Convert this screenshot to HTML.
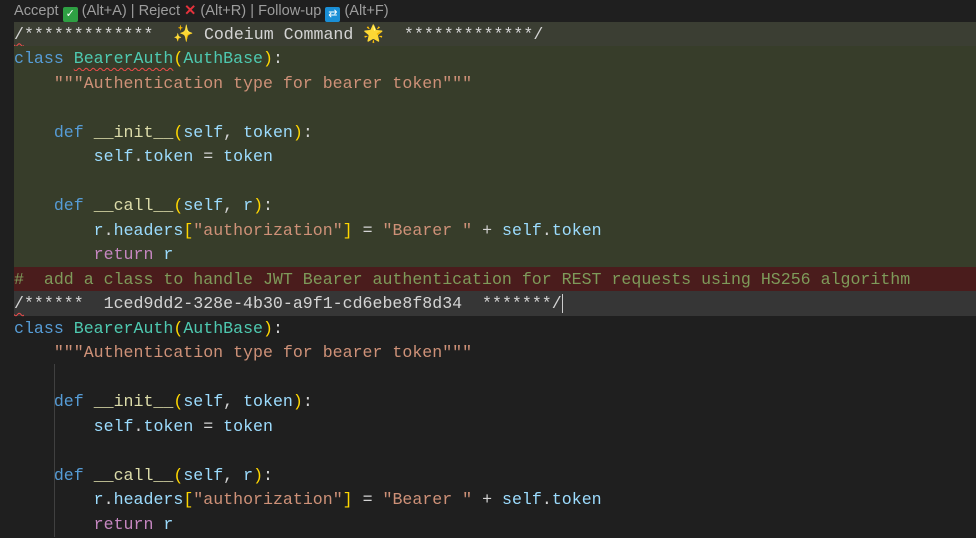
<!DOCTYPE html>
<html><head><meta charset="utf-8"><style>
body{margin:0;width:976px;height:537px;background:#1f1f1f;overflow:hidden;position:relative}
.top{position:absolute;left:14px;top:2px;font:14.6px "Liberation Sans",sans-serif;color:#9d9d9d;white-space:pre}
.ic{display:inline-block;width:15px;height:15px;border-radius:2px;vertical-align:-2px;text-align:center;font-size:11px;line-height:15px;color:#fff}
.code{position:absolute;left:14px;top:21.5px;right:0;font:16.6px "Liberation Mono","DejaVu Sans Mono",monospace;color:#d4d4d4}
.l{height:24.5px;line-height:26px;white-space:pre;position:relative}
.g{background:#373d2a}.gb{background:#3b3e33}.r{background:#4a1c1c}.u{background:#363636}
.k{color:#569cd6}.c{color:#4ec9b0}.y{color:#ffd700}.s{color:#ce9178}.f{color:#dcdcaa}.v{color:#9cdcfe}.p{color:#c586c0}.cm{color:#7e9a5a}.w{color:#d4d4d4}
.sq{text-decoration:underline wavy #f14c4c;text-decoration-thickness:1px;text-underline-offset:4px}
.guide{position:absolute;width:1px;background:#404040}
</style></head><body>
<div class="top">Accept <span class="ic" style="background:#2ea043">✓</span> (Alt+A) | Reject <span style="color:#e5323c;font-weight:bold">✕</span> (Alt+R) | Follow-up <span class="ic" style="background:#1a8fd6">⇄</span> (Alt+F)</div>
<div class="guide" style="left:54px;top:95px;height:172px;background:#4a5040"></div>
<div class="guide" style="left:54px;top:364px;height:173px"></div>
<div class="code">
<div class="l gb"><span class="sq">/</span>*************  <span class="y">✨</span> Codeium Command <span class="y">🌟</span>  *************/</div>
<div class="l g"><span class="k">class</span> <span class="c sq">BearerAuth</span><span class="y">(</span><span class="c">AuthBase</span><span class="y">)</span>:</div>
<div class="l g">    <span class="s">"""Authentication type for bearer token"""</span></div>
<div class="l g"> </div>
<div class="l g">    <span class="k">def</span> <span class="f">__init__</span><span class="y">(</span><span class="v">self</span>, <span class="v">token</span><span class="y">)</span>:</div>
<div class="l g">        <span class="v">self</span>.<span class="v">token</span> = <span class="v">token</span></div>
<div class="l g"> </div>
<div class="l g">    <span class="k">def</span> <span class="f">__call__</span><span class="y">(</span><span class="v">self</span>, <span class="v">r</span><span class="y">)</span>:</div>
<div class="l g">        <span class="v">r</span>.<span class="v">headers</span><span class="y">[</span><span class="s">"authorization"</span><span class="y">]</span> = <span class="s">"Bearer "</span> + <span class="v">self</span>.<span class="v">token</span></div>
<div class="l g">        <span class="p">return</span> <span class="v">r</span></div>
<div class="l r"><span class="cm">#  add a class to handle JWT Bearer authentication for REST requests using HS256 algorithm</span></div>
<div class="l u"><span class="sq">/</span>******  1ced9dd2-328e-4b30-a9f1-cd6ebe8f8d34  *******/<span style="border-left:1px solid #ccc"></span></div>
<div class="l"><span class="k">class</span> <span class="c">BearerAuth</span><span class="y">(</span><span class="c">AuthBase</span><span class="y">)</span>:</div>
<div class="l">    <span class="s">"""Authentication type for bearer token"""</span></div>
<div class="l"> </div>
<div class="l">    <span class="k">def</span> <span class="f">__init__</span><span class="y">(</span><span class="v">self</span>, <span class="v">token</span><span class="y">)</span>:</div>
<div class="l">        <span class="v">self</span>.<span class="v">token</span> = <span class="v">token</span></div>
<div class="l"> </div>
<div class="l">    <span class="k">def</span> <span class="f">__call__</span><span class="y">(</span><span class="v">self</span>, <span class="v">r</span><span class="y">)</span>:</div>
<div class="l">        <span class="v">r</span>.<span class="v">headers</span><span class="y">[</span><span class="s">"authorization"</span><span class="y">]</span> = <span class="s">"Bearer "</span> + <span class="v">self</span>.<span class="v">token</span></div>
<div class="l">        <span class="p">return</span> <span class="v">r</span></div>
</div>
</body></html>
